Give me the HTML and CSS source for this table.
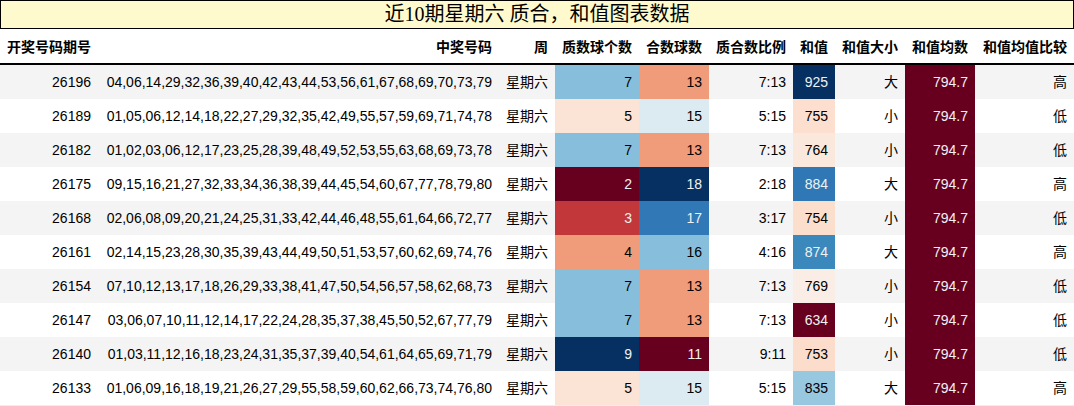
FILE: index.html
```html
<!DOCTYPE html>
<html lang="zh">
<head>
<meta charset="utf-8">
<title>近10期星期六 质合，和值图表数据</title>
<link rel="stylesheet" href="styles.css">
</head>
<body>
<div class="caption">近10期星期六 质合，和值图表数据</div>
<table class="data">
<colgroup>
<col class="w-issue"><col class="w-nums"><col class="w-week"><col class="w-prime"><col class="w-comp"><col class="w-ratio"><col class="w-sum"><col class="w-size"><col class="w-avg"><col class="w-cmp">
</colgroup>
<thead>
<tr><th>开奖号码期号</th><th>中奖号码</th><th>周</th><th>质数球个数</th><th>合数球数</th><th>质合数比例</th><th>和值</th><th>和值大小</th><th>和值均数</th><th>和值均值比较</th></tr>
</thead>
<tbody>
<tr><td>26196</td><td>04,06,14,29,32,36,39,40,42,43,44,53,56,61,67,68,69,70,73,79</td><td>星期六</td><td class="c-lblue">7</td><td class="c-salmon">13</td><td>7:13</td><td class="c-navy">925</td><td>大</td><td class="c-wine">794.7</td><td>高</td></tr>
<tr><td>26189</td><td>01,05,06,12,14,18,22,27,29,32,35,42,49,55,57,59,69,71,74,78</td><td>星期六</td><td class="c-peach">5</td><td class="c-pale">15</td><td>5:15</td><td class="c-s755">755</td><td>小</td><td class="c-wine">794.7</td><td>低</td></tr>
<tr><td>26182</td><td>01,02,03,06,12,17,23,25,28,39,48,49,52,53,55,63,68,69,73,78</td><td>星期六</td><td class="c-lblue">7</td><td class="c-salmon">13</td><td>7:13</td><td class="c-s764">764</td><td>小</td><td class="c-wine">794.7</td><td>低</td></tr>
<tr><td>26175</td><td>09,15,16,21,27,32,33,34,36,38,39,44,45,54,60,67,77,78,79,80</td><td>星期六</td><td class="c-wine">2</td><td class="c-navy">18</td><td>2:18</td><td class="c-s884">884</td><td>大</td><td class="c-wine">794.7</td><td>高</td></tr>
<tr><td>26168</td><td>02,06,08,09,20,21,24,25,31,33,42,44,46,48,55,61,64,66,72,77</td><td>星期六</td><td class="c-red">3</td><td class="c-blue">17</td><td>3:17</td><td class="c-s754">754</td><td>小</td><td class="c-wine">794.7</td><td>低</td></tr>
<tr><td>26161</td><td>02,14,15,23,28,30,35,39,43,44,49,50,51,53,57,60,62,69,74,76</td><td>星期六</td><td class="c-salmon">4</td><td class="c-lblue">16</td><td>4:16</td><td class="c-s874">874</td><td>大</td><td class="c-wine">794.7</td><td>高</td></tr>
<tr><td>26154</td><td>07,10,12,13,17,18,26,29,33,38,41,47,50,54,56,57,58,62,68,73</td><td>星期六</td><td class="c-lblue">7</td><td class="c-salmon">13</td><td>7:13</td><td class="c-s769">769</td><td>小</td><td class="c-wine">794.7</td><td>低</td></tr>
<tr><td>26147</td><td>03,06,07,10,11,12,14,17,22,24,28,35,37,38,45,50,52,67,77,79</td><td>星期六</td><td class="c-lblue">7</td><td class="c-salmon">13</td><td>7:13</td><td class="c-wine">634</td><td>小</td><td class="c-wine">794.7</td><td>低</td></tr>
<tr><td>26140</td><td>01,03,11,12,16,18,23,24,31,35,37,39,40,54,61,64,65,69,71,79</td><td>星期六</td><td class="c-navy">9</td><td class="c-wine">11</td><td>9:11</td><td class="c-s753">753</td><td>小</td><td class="c-wine">794.7</td><td>低</td></tr>
<tr><td>26133</td><td>01,06,09,16,18,19,21,26,27,29,55,58,59,60,62,66,73,74,76,80</td><td>星期六</td><td class="c-peach">5</td><td class="c-pale">15</td><td>5:15</td><td class="c-s835">835</td><td>大</td><td class="c-wine">794.7</td><td>高</td></tr>
</tbody>
</table>
</body>
</html>
```

FILE: styles.css
```css
html, body {
  margin: 0;
  padding: 0;
  background: #ffffff;
}

body {
  width: 1074px;
}

.caption {
  box-sizing: border-box;
  height: 29px;
  border: 1px solid #000000;
  background: #fffacd;
  font-family: "Liberation Serif", "Noto Sans CJK SC", serif;
  font-size: 20px;
  line-height: 27px;
  text-align: center;
  color: #000000;
}

.data {
  width: 1074px;
  table-layout: fixed;
  border-collapse: collapse;
  font-family: "Liberation Sans", "Noto Sans CJK SC", sans-serif;
  font-size: 14px;
  color: #000000;
}

.w-issue { width: 98px; }
.w-nums { width: 401px; }
.w-week { width: 56px; }
.w-prime { width: 84px; }
.w-comp { width: 70px; }
.w-ratio { width: 84px; }
.w-sum { width: 42px; }
.w-size { width: 70px; }
.w-avg { width: 70px; }
.w-cmp { width: 99px; }

.data th,
.data td {
  padding: 0 7px;
  text-align: right;
  white-space: nowrap;
  overflow: hidden;
}

.data th {
  height: 34px;
  font-weight: bold;
  border-bottom: 2px solid #000000;
  vertical-align: middle;
}

.data td {
  height: 34px;
  line-height: 16px;
  vertical-align: middle;
}

.data tbody tr:nth-child(odd) {
  background: #f4f4f4;
}

.data tbody tr:last-child td {
  border-bottom: 1px solid #eeeeee;
}

.c-wine { background: #67001f; color: #f1f1f1; }
.c-navy { background: #053061; color: #f1f1f1; }
.c-red { background: #c1373a; color: #f1f1f1; }
.c-blue { background: #3079b6; color: #f1f1f1; }
.c-salmon { background: #f09b7a; }
.c-lblue { background: #87bedb; }
.c-peach { background: #fbe3d5; }
.c-pale { background: #dceaf2; }
.c-s755 { background: #fcdfcf; }
.c-s764 { background: #fae8dd; }
.c-s884 { background: #2f78b5; color: #f1f1f1; }
.c-s754 { background: #fcdecd; }
.c-s874 { background: #3b88bd; color: #f1f1f1; }
.c-s769 { background: #f9ede6; }
.c-s753 { background: #fcddcb; }
.c-s835 { background: #98c8e0; }
```
